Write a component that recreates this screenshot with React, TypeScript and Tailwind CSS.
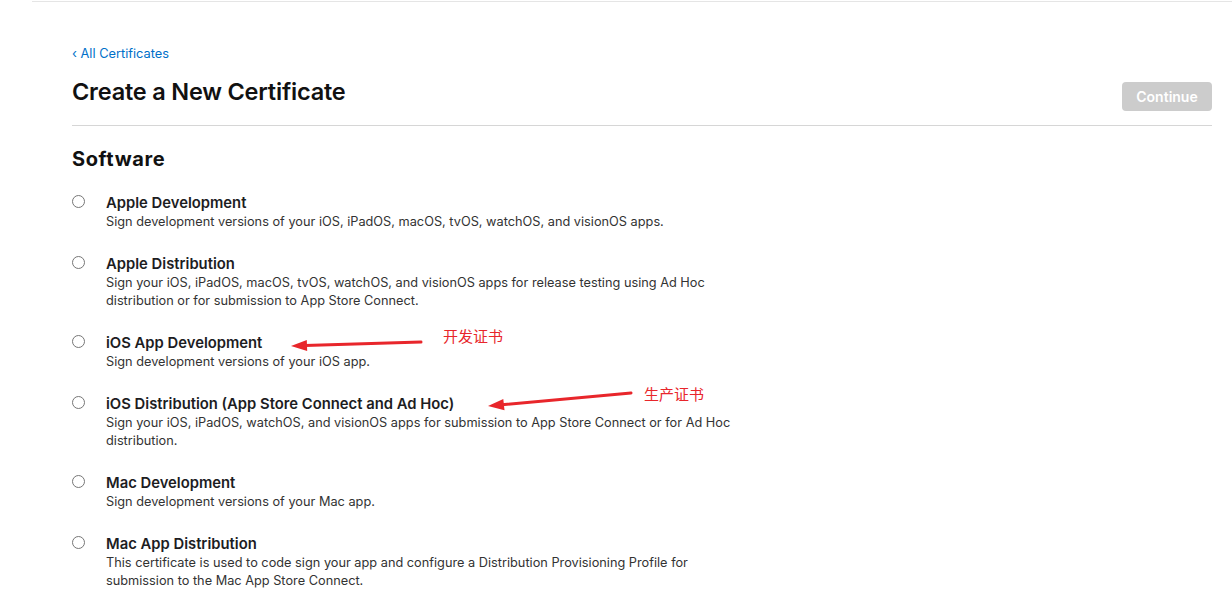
import React from "react";

type Cert = { title: string; desc: string };

const certs: Cert[] = [
  {
    title: "Apple Development",
    desc: "Sign development versions of your iOS, iPadOS, macOS, tvOS, watchOS, and visionOS apps.",
  },
  {
    title: "Apple Distribution",
    desc: "Sign your iOS, iPadOS, macOS, tvOS, watchOS, and visionOS apps for release testing using Ad Hoc distribution or for submission to App Store Connect.",
  },
  {
    title: "iOS App Development",
    desc: "Sign development versions of your iOS app.",
  },
  {
    title: "iOS Distribution (App Store Connect and Ad Hoc)",
    desc: "Sign your iOS, iPadOS, watchOS, and visionOS apps for submission to App Store Connect or for Ad Hoc distribution.",
  },
  {
    title: "Mac Development",
    desc: "Sign development versions of your Mac app.",
  },
  {
    title: "Mac App Distribution",
    desc: "This certificate is used to code sign your app and configure a Distribution Provisioning Profile for submission to the Mac App Store Connect.",
  },
];

function CertOption({ cert }: { cert: Cert }) {
  return (
    <label className="flex items-start gap-[21px] cursor-pointer">
      <span className="mt-[2px] w-[13px] h-[13px] shrink-0 rounded-full border border-[#767676] bg-white" />
      <div className="w-[635px]">
        <div className="text-[14.8px] leading-[20px] font-semibold text-[#1d1d1f]">
          {cert.title}
        </div>
        <div className="text-[12.75px] leading-[18px] text-[#333333]">
          {cert.desc}
        </div>
      </div>
    </label>
  );
}

export default function App() {
  return (
    <div
      className="relative w-full h-[593px] overflow-hidden bg-white"
      style={{ fontFamily: "Inter, 'Noto Sans', sans-serif" }}
    >
      <div className="ml-[32px] pt-px">
        <div className="border-t border-[#e5e5e5] pl-[40px] pr-[20px] pt-[43px]">
          {/* back link */}
          <a className="block text-[12.8px] leading-[18px] text-[#0070c9]" href="#">
            ‹ All Certificates
          </a>

          {/* header */}
          <div className="mt-[14px] flex items-start justify-between">
            <h1 className="text-[23.5px] leading-[30px] font-semibold text-[#111111] tracking-[-0.2px]">
              Create a New Certificate
            </h1>
            <button
              disabled
              className="mt-[5px] w-[90px] h-[29px] rounded-[4px] bg-[#cccccc] text-white text-[14px] leading-[25px] font-semibold"
            >
              Continue
            </button>
          </div>

          <div className="mt-[14px] border-t border-[#d6d6d6]" />

          <h2 className="mt-[20px] text-[20px] leading-[26px] font-bold text-[#111111] tracking-[0.6px]">
            Software
          </h2>

          <div className="mt-[21px] flex flex-col gap-[23px]">
            {certs.map((c) => (
              <CertOption key={c.title} cert={c} />
            ))}
          </div>
        </div>
      </div>

      {/* annotations */}
      <svg
        className="absolute inset-0 pointer-events-none"
        width="1232"
        height="593"
        viewBox="0 0 1232 593"
      >
        <line x1="421" y1="342" x2="305" y2="345.5" stroke="#e8262b" strokeWidth="3" strokeLinecap="round" />
        <polygon points="291,346 307.2,351 306.8,340" fill="#e8262b" />
        <line x1="631" y1="393" x2="502" y2="404.7" stroke="#e8262b" strokeWidth="3" strokeLinecap="round" />
        <polygon points="488,406 504.5,410.3 503.3,399" fill="#e8262b" />
      </svg>
      <span
        className="absolute left-[443px] top-[326px] text-[15px] leading-[20px] text-[#e8262b]"
        style={{ fontFamily: "'Noto Sans CJK SC', sans-serif" }}
      >
        开发证书
      </span>
      <span
        className="absolute left-[644px] top-[384px] text-[15px] leading-[20px] text-[#e8262b]"
        style={{ fontFamily: "'Noto Sans CJK SC', sans-serif" }}
      >
        生产证书
      </span>
    </div>
  );
}
